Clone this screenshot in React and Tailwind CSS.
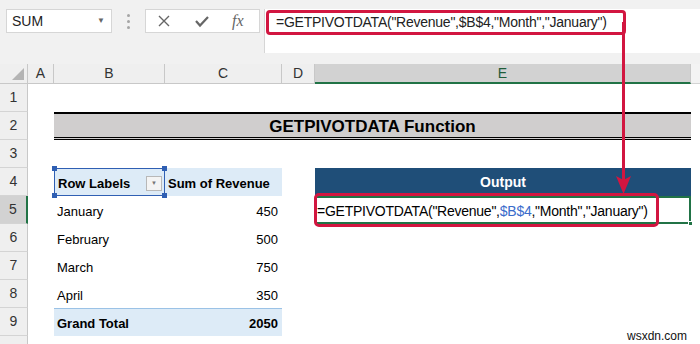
import React from "react";

const F = { fontFamily: '"Liberation Sans", Arial, sans-serif' };

function RowHead({ n, sel }) {
  return (
    <div
      className={
        "w-[28px] shrink-0 flex items-center justify-center text-[14px] text-[#333] border-b border-[#d4d4d4] " +
        (sel ? "bg-[#d2d2d2] border-r-2 border-r-[#217346]" : "bg-[#efefef] border-r border-r-[#c8c8c8]")
      }
    >
      {n}
    </div>
  );
}

function Row({ n, sel, children }) {
  return (
    <div className="flex h-[28px]">
      <RowHead n={n} sel={sel} />
      {children}
    </div>
  );
}

export default function App() {
  return (
    <div className="relative w-[700px] h-[344px] overflow-hidden bg-white text-black" style={F}>
      {/* Toolbar */}
      <div className="flex items-start h-[64px] bg-[#f1f1f1] pt-[9px]">
        <div className="ml-[6px] w-[106px] h-[24px] bg-white border border-[#d6d6d6] flex items-center justify-between pl-[5px] pr-[6px] text-[14px] text-[#222]">
          <span>SUM</span>
          <span className="text-[8px] text-[#666]">▼</span>
        </div>
        <div className="w-[33px] h-[24px] flex flex-col items-center justify-center gap-[3px]">
          <span className="w-[3px] h-[3px] rounded-full bg-[#a5a5a5]" />
          <span className="w-[3px] h-[3px] rounded-full bg-[#a5a5a5]" />
          <span className="w-[3px] h-[3px] rounded-full bg-[#a5a5a5]" />
        </div>
        <div className="w-[115px] h-[24px] bg-white border border-[#d6d6d6] flex items-center">
          <svg className="ml-[11px]" width="14" height="14" viewBox="0 0 14 14">
            <path d="M2 2 L12 12 M12 2 L2 12" stroke="#666" strokeWidth="1.4" fill="none" />
          </svg>
          <svg className="ml-[23px]" width="16" height="14" viewBox="0 0 16 14">
            <path d="M2 7 L6 11.5 L14 3" stroke="#666" strokeWidth="2.2" fill="none" />
          </svg>
          <span
            className="ml-[22px] text-[16px] italic text-[#666] leading-none"
            style={{ fontFamily: '"Liberation Serif", serif' }}
          >
            fx
          </span>
        </div>
        <div className="ml-[4px] flex-1 h-[44px] bg-white border-l border-[#d6d6d6] pl-[11px] pt-[3px] text-[14px] tracking-[-0.25px] text-[#222] whitespace-nowrap">
          =GETPIVOTDATA("Revenue",$B$4,"Month","January")
        </div>
      </div>

      {/* Column headers */}
      <div className="flex h-[20px] text-[14px] text-[#333]">
        <div className="w-[28px] bg-[#efefef] border-r border-b border-[#c8c8c8] relative">
          <div className="absolute right-[3px] bottom-[3px] w-0 h-0 border-l-[12px] border-l-transparent border-b-[12px] border-b-[#b4b4b4]" />
        </div>
        <div className="w-[26px] bg-[#efefef] border-r border-b border-[#c8c8c8] flex items-center justify-center">A</div>
        <div className="w-[111px] bg-[#efefef] border-r border-b border-[#c8c8c8] flex items-center justify-center">B</div>
        <div className="w-[117px] bg-[#efefef] border-r border-b border-[#c8c8c8] flex items-center justify-center">C</div>
        <div className="w-[33px] bg-[#efefef] border-r border-b border-[#c8c8c8] flex items-center justify-center">D</div>
        <div className="w-[376px] bg-[#d2d2d2] border-r border-[#c8c8c8] border-b-2 border-b-[#217346] flex items-center justify-center text-[#215c3a]">E</div>
        <div className="flex-1 bg-[#f3f3f3] border-b border-[#d4d4d4]" />
      </div>

      {/* Sheet rows */}
      <div className="text-[13px]">
        <Row n={1}><div className="flex-1" /></Row>
        <Row n={2}>
          <div className="w-[26px]" />
          <div className="w-[637px] bg-[#d0cece] border-t-2 border-t-black border-b-[3px] border-b-black border-double flex items-center justify-center pt-[2px] text-[17px] font-bold">
            GETPIVOTDATA Function
          </div>
        </Row>
        <Row n={3}><div className="flex-1" /></Row>
        <Row n={4}>
          <div className="w-[26px]" />
          <div className="w-[111px] bg-[#ddebf7] border border-[#2f5fb3] relative flex items-center pl-[3px] pt-[3px] font-bold">
            Row Labels
            <div className="absolute right-[2px] top-[7px] w-[16px] h-[15px] bg-[#f4f4f4] border border-[#b8b8b8] flex items-center justify-center">
              <span className="text-[6px] text-[#777]">▼</span>
            </div>
            <span className="absolute -left-[3px] -top-[3px] w-[5px] h-[5px] bg-[#2f5fb3]" />
            <span className="absolute -right-[3px] -top-[3px] w-[5px] h-[5px] bg-[#2f5fb3]" />
            <span className="absolute -left-[3px] -bottom-[3px] w-[5px] h-[5px] bg-[#2f5fb3]" />
            <span className="absolute -right-[3px] -bottom-[3px] w-[5px] h-[5px] bg-[#2f5fb3]" />
          </div>
          <div className="w-[117px] bg-[#ddebf7] flex items-center pl-[3px] pt-[3px] font-bold whitespace-nowrap">Sum of Revenue</div>
          <div className="w-[33px]" />
          <div className="w-[376px] bg-[#1f4e78] flex items-center justify-center text-white font-bold text-[14px]">Output</div>
        </Row>
        <Row n={5} sel>
          <div className="w-[26px]" />
          <div className="w-[111px] flex items-center pl-[3px] pt-[4px]">January</div>
          <div className="w-[117px] flex items-center justify-end pr-[4px] pt-[4px]">450</div>
          <div className="w-[33px]" />
          <div className="w-[376px] border-2 border-[#217346] relative flex items-center pt-[2px] text-[14px] tracking-[-0.25px] whitespace-nowrap">
            =GETPIVOTDATA("Revenue",<span className="text-[#3a6ccb]">$B$4</span>,"Month","January")
            <span className="absolute -right-[4px] -bottom-[4px] w-[5px] h-[5px] bg-[#217346] border border-white" />
          </div>
        </Row>
        <Row n={6}>
          <div className="w-[26px]" />
          <div className="w-[111px] flex items-center pl-[3px] pt-[4px]">February</div>
          <div className="w-[117px] flex items-center justify-end pr-[4px] pt-[4px]">500</div>
        </Row>
        <Row n={7}>
          <div className="w-[26px]" />
          <div className="w-[111px] flex items-center pl-[3px] pt-[4px]">March</div>
          <div className="w-[117px] flex items-center justify-end pr-[4px] pt-[4px]">750</div>
        </Row>
        <Row n={8}>
          <div className="w-[26px]" />
          <div className="w-[111px] flex items-center pl-[3px] pt-[4px]">April</div>
          <div className="w-[117px] flex items-center justify-end pr-[4px] pt-[4px]">350</div>
        </Row>
        <Row n={9}>
          <div className="w-[26px]" />
          <div className="w-[228px] bg-[#ddebf7] border-t border-[#9bc2e6] flex items-center justify-between pl-[3px] pr-[4px] pt-[3px] font-bold">
            <span>Grand Total</span>
            <span>2050</span>
          </div>
        </Row>
        <Row n="">
          <div className="flex-1" />
        </Row>
      </div>

      {/* Red annotation overlays */}
      <div className="absolute left-[266px] top-[10px] w-[360px] h-[25px] border-[3px] border-[#d21640] rounded-[4px]" />
      <div className="absolute left-[622px] top-[22px] w-[3px] h-[158px] bg-[#d21640]" />
      <svg className="absolute left-[616px] top-[176px]" width="15" height="18" viewBox="0 0 15 18">
        <path d="M0 0 L7.5 4 L15 0 L7.5 18 Z" fill="#d21640" />
      </svg>
      <div className="absolute left-[314px] top-[193px] w-[345px] h-[34px] border-[3px] border-[#d21640] rounded-[5px]" />

      <div className="absolute left-[627px] top-[330px] text-[12px] leading-none text-[#111]">wsxdn.com</div>
    </div>
  );
}
